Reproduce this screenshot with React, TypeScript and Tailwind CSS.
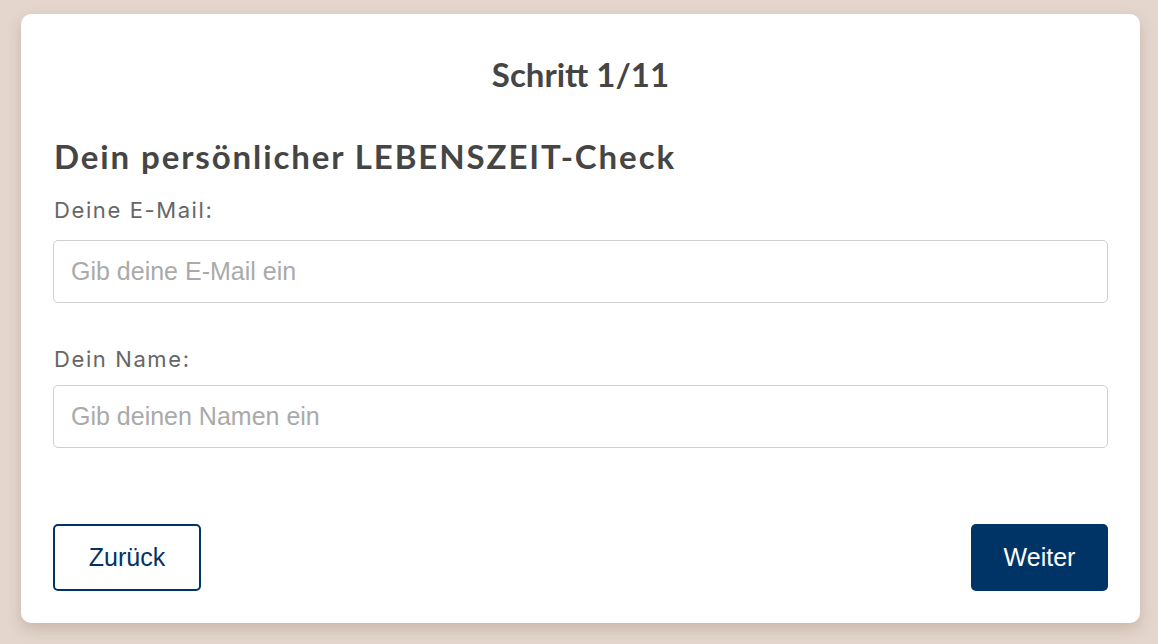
export default function App() {
  return (
    <div className="min-h-screen w-full bg-[#e4d6cd] pt-[14px] pl-[21px] pr-[18px]">
      <div className="w-[1119px] h-[609px] bg-white rounded-[10px] shadow-[0_6px_14px_rgba(120,90,70,0.25)] px-8 pt-8 flex flex-col">
        <h1 className="font-['Lato',sans-serif] font-bold text-[33px] leading-[40px] text-[#454545] text-center mt-[8px]">
          Schritt 1/11
        </h1>
        <h2 className="font-['Lato',sans-serif] font-bold text-[33px] leading-[40px] tracking-[1.9px] text-[#454545] mt-[42px] ml-[1px]">
          Dein persönlicher LEBENSZEIT-Check
        </h2>

        <label className="font-['Inter',sans-serif] text-[22px] leading-[30px] tracking-[1.6px] text-[#666] mt-[19px] ml-[1px]">
          Deine E-Mail:
        </label>
        <input
          type="email"
          placeholder="Gib deine E-Mail ein"
          className="mt-[15px] h-[63px] w-full border border-[#cfcfcf] rounded-[5px] px-[17px] font-['Liberation_Sans',Arial,sans-serif] text-[25px] text-[#333] placeholder:text-[#aaa] outline-none"
        />

        <label className="font-['Inter',sans-serif] text-[22px] leading-[30px] tracking-[1.6px] text-[#666] mt-[41px] ml-[1px]">
          Dein Name:
        </label>
        <input
          type="text"
          placeholder="Gib deinen Namen ein"
          className="mt-[11px] h-[63px] w-full border border-[#cfcfcf] rounded-[5px] px-[17px] font-['Liberation_Sans',Arial,sans-serif] text-[25px] text-[#333] placeholder:text-[#aaa] outline-none"
        />

        <div className="mt-auto mb-8 flex items-center justify-between">
          <button className="w-[148px] h-[67px] border-2 border-[#003466] rounded-[5px] bg-white text-[#003466] font-['Liberation_Sans',Arial,sans-serif] text-[25px]">
            Zurück
          </button>
          <button className="w-[137px] h-[67px] rounded-[5px] bg-[#003466] text-white font-['Liberation_Sans',Arial,sans-serif] text-[25px]">
            Weiter
          </button>
        </div>
      </div>
    </div>
  );
}
